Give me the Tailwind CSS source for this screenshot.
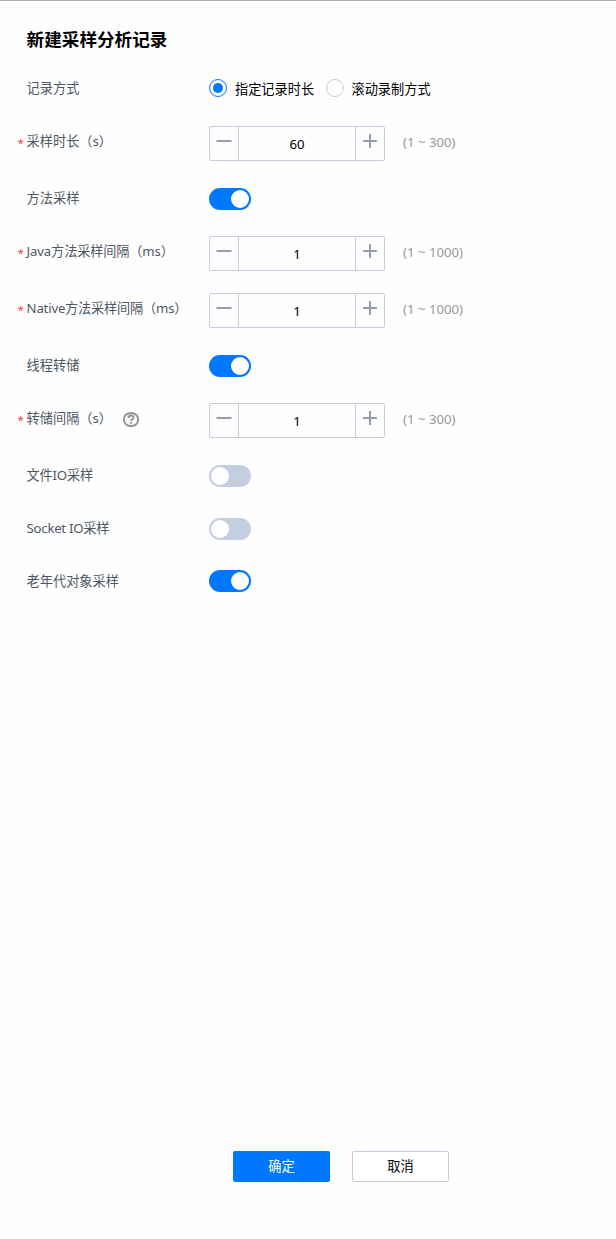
<!DOCTYPE html>
<html lang="zh-CN">
<head>
  <meta charset="UTF-8" />
  <meta name="viewport" content="width=device-width, initial-scale=1.0" />
  <title>新建采样分析记录</title>
  <script src="https://cdn.jsdelivr.net/npm/@tailwindcss/browser@4"></script>
</head>
<body class="bg-[#fefefe] font-['Noto_Sans','Noto_Sans_CJK_SC',sans-serif] text-[13.2px] leading-5 text-black">
  <svg class="hidden">
    <symbol id="minus" viewBox="0 0 16 16"><path d="M0.5 8h15" stroke="#949eae" stroke-width="2" /></symbol>
    <symbol id="plus" viewBox="0 0 16 16"><path d="M1 8h14M8 1v14" stroke="#949eae" stroke-width="2" /></symbol>
  </svg>
  <div class="h-[1239px] flex flex-col border-t border-[#adadad]">
    <h1 class="h-[61px] pl-[26.6px] pt-6 text-[17.6px] leading-7 font-bold">新建采样分析记录</h1>

    <form class="flex flex-col text-[#4e5865]">
      <div class="h-[53px] flex pl-[26.6px]">
        <div class="w-[182.4px] pt-4">记录方式</div>
        <div class="h-[52px] flex items-center text-black">
          <span class="size-[18px] rounded-full border border-[#0077ff] flex items-center justify-center"><span class="size-2.5 rounded-full bg-[#0077ff]"></span></span>
          <span class="ml-2 pt-0.5">指定记录时长</span>
          <span class="ml-[11.4px] size-[18px] rounded-full border border-[#c3cee0]"></span>
          <span class="ml-2 pt-0.5">滚动录制方式</span>
        </div>
      </div>

      <div class="h-[57px] flex pl-[17.6px]">
        <div class="w-[191.4px] pt-4 flex"><span class="w-[9px] pt-0.5 text-[11.5px] text-[#e8414d]">*</span>采样时长（s）</div>
        <div class="mt-[11px] w-44 h-[35px] flex border border-[#c3cee0] rounded-xs text-black">
          <span class="w-7 pt-1.5 flex justify-center"><svg class="size-4"><use href="#minus" /></svg></span>
          <span class="flex-1 pt-[7px] text-center border-x border-[#c3cee0]">60</span>
          <span class="w-7 pt-1.5 flex justify-center"><svg class="size-4"><use href="#plus" /></svg></span>
        </div>
        <span class="ml-[18px] pt-[17px] text-[#999]">(1 ~ 300)</span>
      </div>

      <div class="h-[53px] flex pl-[26.6px]">
        <div class="w-[182.4px] pt-4">方法采样</div>
        <span class="mt-4 w-[42px] h-[22px] pr-0.5 rounded-full bg-[#0077ff] flex items-center justify-end"><span class="size-[18px] rounded-full bg-white"></span></span>
      </div>

      <div class="h-[57px] flex pl-[17.6px]">
        <div class="w-[191.4px] pt-4 flex"><span class="w-[9px] pt-0.5 text-[11.5px] text-[#e8414d]">*</span><span class="tracking-[-0.15px]">Java方法采样间隔（ms）</span></div>
        <div class="mt-[11px] w-44 h-[35px] flex border border-[#c3cee0] rounded-xs text-black">
          <span class="w-7 pt-1.5 flex justify-center"><svg class="size-4"><use href="#minus" /></svg></span>
          <span class="flex-1 pt-[7px] text-center border-x border-[#c3cee0]">1</span>
          <span class="w-7 pt-1.5 flex justify-center"><svg class="size-4"><use href="#plus" /></svg></span>
        </div>
        <span class="ml-[18px] pt-[17px] text-[#999]">(1 ~ 1000)</span>
      </div>

      <div class="h-[57px] flex pl-[17.6px]">
        <div class="w-[191.4px] pt-4 flex"><span class="w-[9px] pt-0.5 text-[11.5px] text-[#e8414d]">*</span><span class="tracking-[-0.2px]">Native方法采样间隔（ms）</span></div>
        <div class="mt-[11px] w-44 h-[35px] flex border border-[#c3cee0] rounded-xs text-black">
          <span class="w-7 pt-1.5 flex justify-center"><svg class="size-4"><use href="#minus" /></svg></span>
          <span class="flex-1 pt-[7px] text-center border-x border-[#c3cee0]">1</span>
          <span class="w-7 pt-1.5 flex justify-center"><svg class="size-4"><use href="#plus" /></svg></span>
        </div>
        <span class="ml-[18px] pt-[17px] text-[#999]">(1 ~ 1000)</span>
      </div>

      <div class="h-[53px] flex pl-[26.6px]">
        <div class="w-[182.4px] pt-4">线程转储</div>
        <span class="mt-4 w-[42px] h-[22px] pr-0.5 rounded-full bg-[#0077ff] flex items-center justify-end"><span class="size-[18px] rounded-full bg-white"></span></span>
      </div>

      <div class="h-[57px] flex pl-[17.6px]">
        <div class="w-[191.4px] pt-4 flex">
          <span class="w-[9px] pt-0.5 text-[11.5px] text-[#e8414d]">*</span>
          <span class="w-[95.4px]">转储间隔（s）</span>
          <svg class="mt-[3px] size-[17px]" viewBox="0 0 17 17" fill="none" stroke="#959595" stroke-width="2">
            <ellipse cx="9" cy="8.5" rx="7.2" ry="6.6" />
            <path d="M6.5 7c0-3.2 5-3.2 5-.3 0 1.6-2.4 1.5-2.4 3.3M9.1 11v1.8" />
          </svg>
        </div>
        <div class="mt-[11px] w-44 h-[35px] flex border border-[#c3cee0] rounded-xs text-black">
          <span class="w-7 pt-1.5 flex justify-center"><svg class="size-4"><use href="#minus" /></svg></span>
          <span class="flex-1 pt-[7px] text-center border-x border-[#c3cee0]">1</span>
          <span class="w-7 pt-1.5 flex justify-center"><svg class="size-4"><use href="#plus" /></svg></span>
        </div>
        <span class="ml-[18px] pt-[17px] text-[#999]">(1 ~ 300)</span>
      </div>

      <div class="h-[53px] flex pl-[26.6px]">
        <div class="w-[182.4px] pt-4 tracking-[-0.2px]">文件IO采样</div>
        <span class="mt-4 w-[42px] h-[22px] pl-0.5 rounded-full bg-[#c3cee0] flex items-center"><span class="size-[18px] rounded-full bg-white"></span></span>
      </div>

      <div class="h-[52px] flex pl-[26.6px]">
        <div class="w-[182.4px] pt-4 tracking-[-0.25px]">Socket IO采样</div>
        <span class="mt-4 w-[42px] h-[22px] pl-0.5 rounded-full bg-[#c3cee0] flex items-center"><span class="size-[18px] rounded-full bg-white"></span></span>
      </div>

      <div class="h-[53px] flex pl-[26.6px]">
        <div class="w-[182.4px] pt-[17px]">老年代对象采样</div>
        <span class="mt-4 w-[42px] h-[22px] pr-0.5 rounded-full bg-[#0077ff] flex items-center justify-end"><span class="size-[18px] rounded-full bg-white"></span></span>
      </div>
    </form>

    <div class="mt-auto mb-[57px] ml-[233px] flex gap-[22px]">
      <button class="w-[97px] h-[31px] pb-0.5 rounded-xs bg-[#0077ff] text-white">确定</button>
      <button class="w-[97px] h-[31px] pb-0.5 rounded-xs border border-[#c3cee0] bg-white">取消</button>
    </div>
  </div>
</body>
</html>
